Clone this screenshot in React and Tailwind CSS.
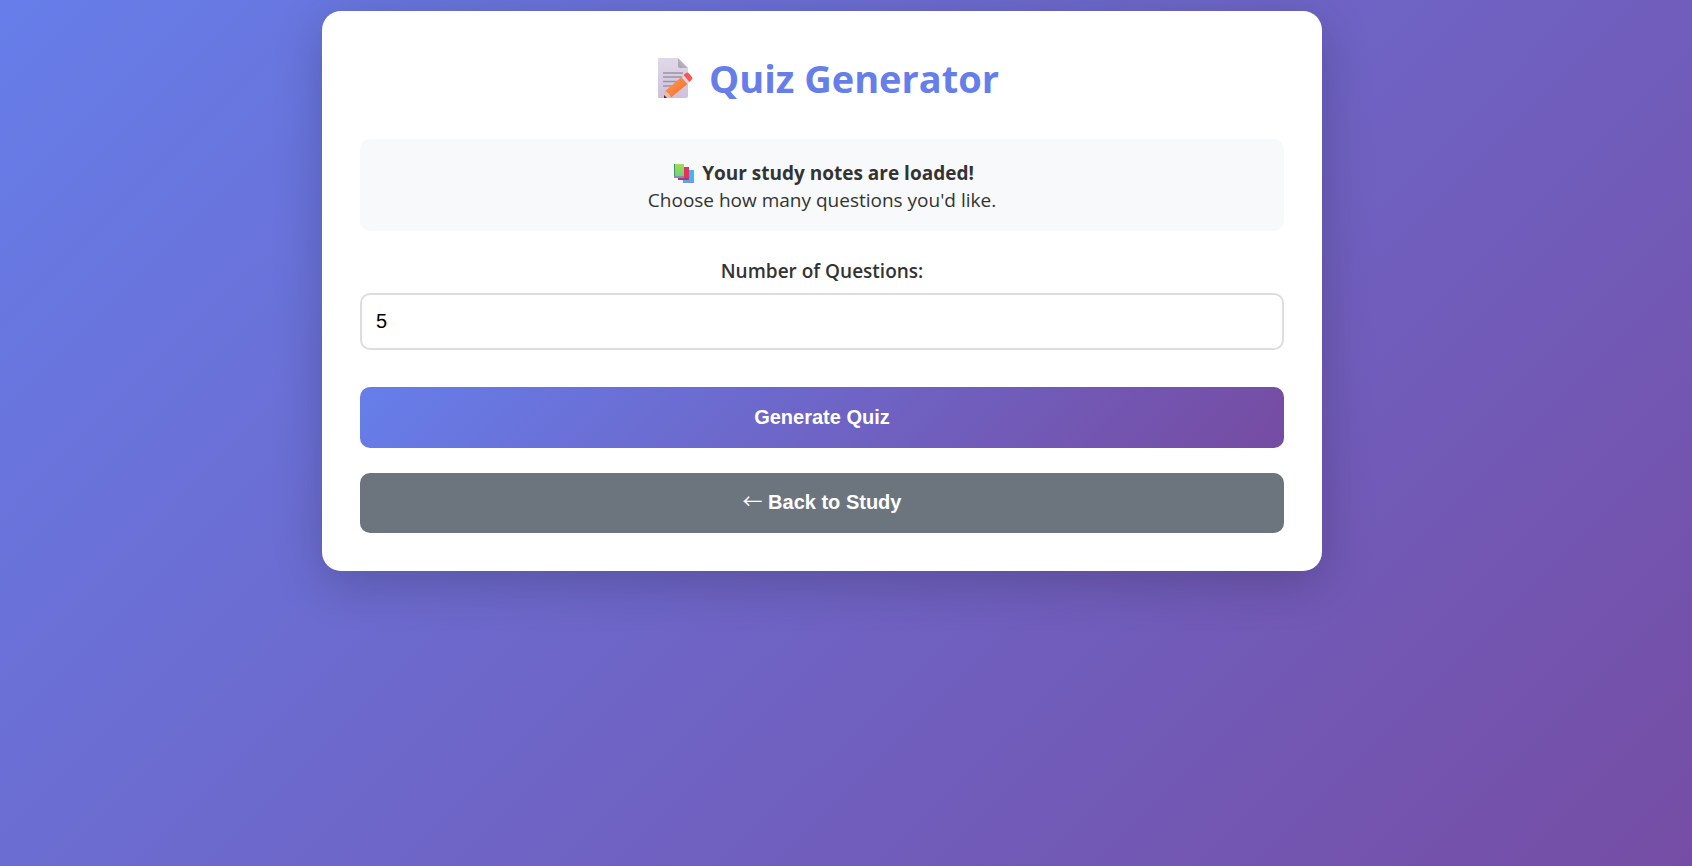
import React, { useState } from 'react';

function MemoIcon() {
  return (
    <svg viewBox="0 0 36 42" className="w-9 h-[42px]" aria-hidden="true">
      <defs>
        <linearGradient id="memo-page" x1="0" y1="0" x2="0" y2="1">
          <stop offset="0" stopColor="#e0d9e8" />
          <stop offset="1" stopColor="#cec0dc" />
        </linearGradient>
        <linearGradient id="memo-fold" x1="0" y1="1" x2="1" y2="0">
          <stop offset="0" stopColor="#a69fae" />
          <stop offset="1" stopColor="#cfc8d6" />
        </linearGradient>
        <linearGradient id="memo-pencil" x1="0" y1="0" x2="1" y2="1">
          <stop offset="0" stopColor="#ffa04a" />
          <stop offset="1" stopColor="#f4682f" />
        </linearGradient>
      </defs>
      <path d="M1 1h20l10 10v28q0 2-2 2H2q-1 0-1-1z" fill="url(#memo-page)" />
      <path d="M21 1l10 10h-8q-2 0-2-2z" fill="url(#memo-fold)" />
      <path d="M6 16h20M6 20h20M6 24.500h16M6 29h11" stroke="#9c93a6" strokeWidth="1.500" fill="none" />
      <path d="M8 34l5 6-5 1H7l-.5-1z" fill="#f0b9a0" />
      <path d="M7 38l3 3H7z" fill="#4a2a48" />
      <path d="M8 34L24.500 20l6 7L14 40.500Q12.500 36 8 34z" fill="url(#memo-pencil)" />
      <path d="M24.500 20l2-2 6 7-2 2z" fill="#ddd3ea" />
      <path d="M26.500 18l2.500-2q1.500-1 3 .5l2.800 3.300q1.200 1.600 0 2.700L32.500 25z" fill="#f9574f" />
    </svg>
  );
}

function BooksIcon() {
  return (
    <svg viewBox="0 0 20 20" className="w-5 h-5" aria-hidden="true">
      <defs>
        <linearGradient id="books-green" x1="0" y1="0" x2="0" y2="1">
          <stop offset="0" stopColor="#a3dc55" />
          <stop offset="1" stopColor="#6fce80" />
        </linearGradient>
      </defs>
      <path d="M9 6h11v13H9z" fill="#40b5f2" />
      <path d="M9 17h10v2H9z" fill="#8793d0" />
      <path d="M4 3h11v13H4z" fill="#e8305f" />
      <path d="M4 14h10v2H4z" fill="#9d3d7c" />
      <path d="M0 0h10v13H0z" fill="url(#books-green)" />
      <path d="M0 0h1v13H0z" fill="#3f9865" />
      <path d="M0 12h10v2H0z" fill="#9089ae" />
    </svg>
  );
}

export default function App() {
  const [count, setCount] = useState(5);

  return (
    <div className="min-h-screen pl-6 pr-[72px] pt-[11px] pb-6 bg-[linear-gradient(135deg,#667eea_-2%,#764ba2_104%)] font-['Open_Sans','Noto_Sans',sans-serif] text-[#333]">
      <main className="max-w-[1000px] mx-auto bg-white rounded-[19px] p-[38px] shadow-[0_12px_50px_rgba(0,0,0,0.2)]">
        <h1 className="flex items-center justify-center gap-4 h-[58px] pl-3 text-[38px] font-bold text-[#667eea]">
          <MemoIcon />
          Quiz Generator
        </h1>

        <section className="mt-8 pt-[21px] pb-[17px] rounded-[10px] bg-[#f8f9fa] text-center text-[19px] leading-[27px]">
          <p className="flex items-center justify-center gap-2 pl-1 font-bold">
            <BooksIcon />
            Your study notes are loaded!
          </p>
          <p>Choose how many questions you'd like.</p>
        </section>

        <form onSubmit={(e) => e.preventDefault()}>
          <label htmlFor="question-count" className="block mt-[27px] mb-2 text-center text-[19px] leading-[27px] font-semibold">
            Number of Questions:
          </label>
          <input
            id="question-count"
            type="number"
            min="1"
            value={count}
            onChange={(e) => setCount(e.target.value)}
            className="block w-full h-[57px] px-[14px] border-2 border-[#ddd] rounded-[10px] bg-white text-black text-[20px] font-['Liberation_Sans',sans-serif] outline-none"
          />
          <button
            type="submit"
            className="block w-full h-[61px] mt-[37px] pb-[2px] rounded-[10px] bg-[linear-gradient(135deg,#667eea_0%,#764ba2_100%)] text-white text-[20px] font-bold font-['Liberation_Sans',sans-serif]"
          >
            Generate Quiz
          </button>
          <button
            type="button"
            className="block w-full h-[60px] mt-[25px] pb-[2px] rounded-[10px] bg-[#6c757d] text-white text-[20px] leading-6 font-bold font-['Liberation_Sans',sans-serif]"
          >
            <span className="font-normal leading-none font-['Noto_Sans_CJK_JP',sans-serif]">←</span> Back to Study
          </button>
        </form>
      </main>
    </div>
  );
}
